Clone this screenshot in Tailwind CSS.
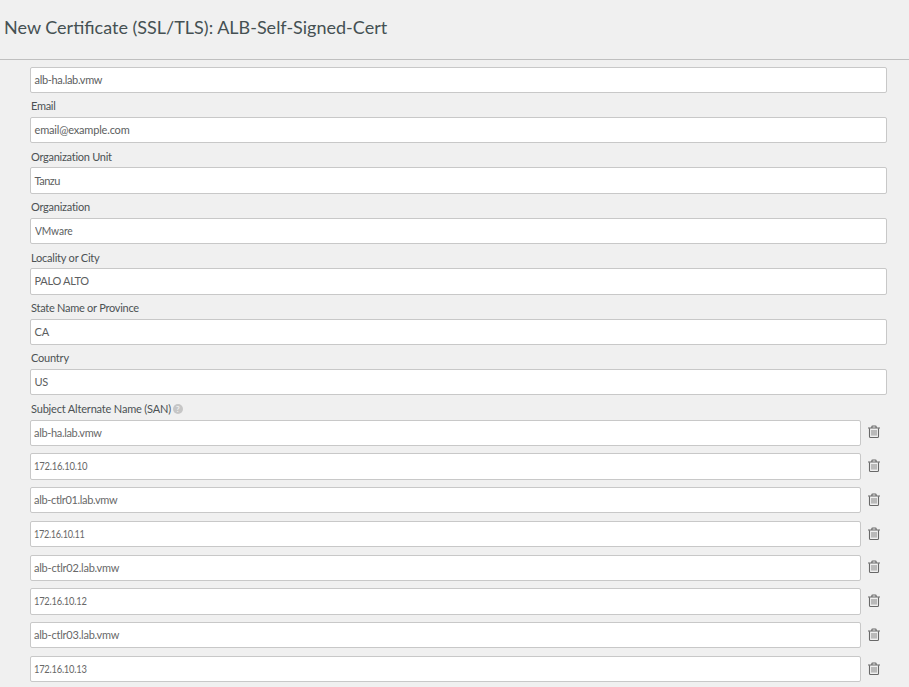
<!DOCTYPE html>
<html lang="en">
<head>
<meta charset="utf-8">
<title>New Certificate (SSL/TLS): ALB-Self-Signed-Cert</title>
<script src="https://cdn.jsdelivr.net/npm/@tailwindcss/browser@4"></script>
</head>
<body class="h-[687px] overflow-hidden bg-[#f0f0f0] font-[Lato,sans-serif] text-[11px] text-[#4c5254]">
<svg class="hidden">
  <symbol id="trash" viewBox="0 0 12 14">
    <path d="M0 3H12M3.9 2.7V1.7Q3.9 1 4.7 1H7.3Q8.1 1 8.1 1.7V2.7" fill="none" stroke="#686868" stroke-width="1.2"/>
    <path d="M1.5 3.3V11.4Q1.5 12.5 2.6 12.5H9.4Q10.5 12.5 10.5 11.4V3.3" fill="none" stroke="#686868" stroke-width="1.1"/>
    <path d="M4 5V10.6M6 5V10.6M8 5V10.6" fill="none" stroke="#777" stroke-width=".9"/>
  </symbol>
</svg>

<header class="flex h-[60px] items-center border-b border-[#bfbfbf] pb-[5px] pl-1">
  <h1 class="whitespace-nowrap text-[18px] leading-6 text-[#455053]">New Certificate (SSL/TLS): ALB-Self-Signed-Cert</h1>
</header>

<main class="flex w-[887px] flex-col pl-[30px] pt-[7px]">
  <div class="flex h-[26px] items-center rounded-[2px] border border-[#c8c8c8] bg-white pl-[3.5px] text-[#5c5e60] tracking-[-0.33px]">alb-ha.lab.vmw</div>

  <label class="flex h-6 items-center pl-px pt-[3px] tracking-[-0.3px]">Email</label>
  <div class="flex h-[26px] items-center rounded-[2px] border border-[#c8c8c8] bg-white pl-[3.5px] text-[#5c5e60] tracking-[-0.18px]">email@example.com</div>

  <label class="flex h-6 items-center pl-px pt-[5px] tracking-[-0.27px]">Organization Unit</label>
  <div class="flex h-[27px] items-center rounded-[2px] border border-[#c8c8c8] bg-white pl-[3.5px] pt-[2px] text-[#5c5e60] tracking-[-0.5px]">Tanzu</div>

  <label class="flex h-6 items-center pl-px pt-[2px] tracking-[-0.25px]">Organization</label>
  <div class="flex h-[26px] items-center rounded-[2px] border border-[#c8c8c8] bg-white pl-[3.5px] text-[#5c5e60]"><span class="origin-left scale-x-[.93] tracking-[-0.12px]">VMware</span></div>

  <label class="flex h-6 items-center pl-px pt-[5px] tracking-[-0.22px]">Locality or City</label>
  <div class="flex h-[27px] items-center rounded-[2px] border border-[#c8c8c8] bg-white pl-[3.5px] text-[#5c5e60] tracking-[-0.3px]">PALO ALTO</div>

  <label class="flex h-6 items-center pl-px pt-[2px] tracking-[-0.26px]">State Name or Province</label>
  <div class="flex h-[26px] items-center rounded-[2px] border border-[#c8c8c8] bg-white pl-[3.5px] text-[#5c5e60] tracking-[-0.2px]">CA</div>

  <label class="flex h-6 items-center pl-px pt-[2px] tracking-[-0.2px]">Country</label>
  <div class="flex h-[26px] items-center rounded-[2px] border border-[#c8c8c8] bg-white pl-[3.5px] text-[#5c5e60] tracking-[-0.4px]">US</div>

  <label class="flex h-[25px] items-center gap-[2px] pl-px pt-[3px]"><span class="tracking-[-0.18px]">Subject Alternate Name (SAN)</span><span class="flex size-[10px] items-center justify-center rounded-full bg-[#c6c6c6] text-[8px] font-bold leading-none text-[#f0f0f0]">?</span></label>

  <div class="flex h-[26px] gap-[7px]">
    <div class="flex w-[831px] items-center rounded-[2px] border border-[#c8c8c8] bg-white pl-[3px] text-[#686868] tracking-[-0.33px]">alb-ha.lab.vmw</div>
    <svg class="mt-[5px] h-[14px] w-3"><use href="#trash"/></svg>
  </div>
  <div class="mt-[7px] flex h-[27px] gap-[7px]">
    <div class="flex w-[831px] items-center rounded-[2px] border border-[#c8c8c8] bg-white pl-[3px] text-[#686868]"><span class="origin-left scale-x-[.86] tracking-[-0.28px]">172.16.10.10</span></div>
    <svg class="mt-[6px] h-[14px] w-3"><use href="#trash"/></svg>
  </div>
  <div class="mt-[7px] flex h-[26px] gap-[7px]">
    <div class="flex w-[831px] items-center rounded-[2px] border border-[#c8c8c8] bg-white pl-[3px] text-[#686868] tracking-[-0.33px]">alb-ctlr01.lab.vmw</div>
    <svg class="mt-[6px] h-[14px] w-3"><use href="#trash"/></svg>
  </div>
  <div class="mt-2 flex h-[26px] gap-[7px]">
    <div class="flex w-[831px] items-center rounded-[2px] border border-[#c8c8c8] bg-white pl-[3px] text-[#686868]"><span class="origin-left scale-x-[.83] tracking-[-0.36px]">172.16.10.11</span></div>
    <svg class="mt-[6px] h-[14px] w-3"><use href="#trash"/></svg>
  </div>
  <div class="mt-2 flex h-[26px] gap-[7px]">
    <div class="flex w-[831px] items-center rounded-[2px] border border-[#c8c8c8] bg-white pl-[3px] text-[#686868] tracking-[-0.22px]">alb-ctlr02.lab.vmw</div>
    <svg class="mt-[5px] h-[14px] w-3"><use href="#trash"/></svg>
  </div>
  <div class="mt-[7px] flex h-[27px] gap-[7px]">
    <div class="flex w-[831px] items-center rounded-[2px] border border-[#c8c8c8] bg-white pl-[3px] text-[#686868]"><span class="origin-left scale-x-[.85] tracking-[-0.28px]">172.16.10.12</span></div>
    <svg class="mt-[6px] h-[14px] w-3"><use href="#trash"/></svg>
  </div>
  <div class="mt-[7px] flex h-[26px] gap-[7px]">
    <div class="flex w-[831px] items-center rounded-[2px] border border-[#c8c8c8] bg-white pl-[3px] text-[#686868] tracking-[-0.22px]">alb-ctlr03.lab.vmw</div>
    <svg class="mt-[6px] h-[14px] w-3"><use href="#trash"/></svg>
  </div>
  <div class="mt-2 flex h-[26px] gap-[7px]">
    <div class="flex w-[831px] items-center rounded-[2px] border border-[#c8c8c8] bg-white pl-[3px] text-[#686868]"><span class="origin-left scale-x-[.85] tracking-[-0.28px]">172.16.10.13</span></div>
    <svg class="mt-[6px] h-[14px] w-3"><use href="#trash"/></svg>
  </div>
</main>
</body>
</html>
